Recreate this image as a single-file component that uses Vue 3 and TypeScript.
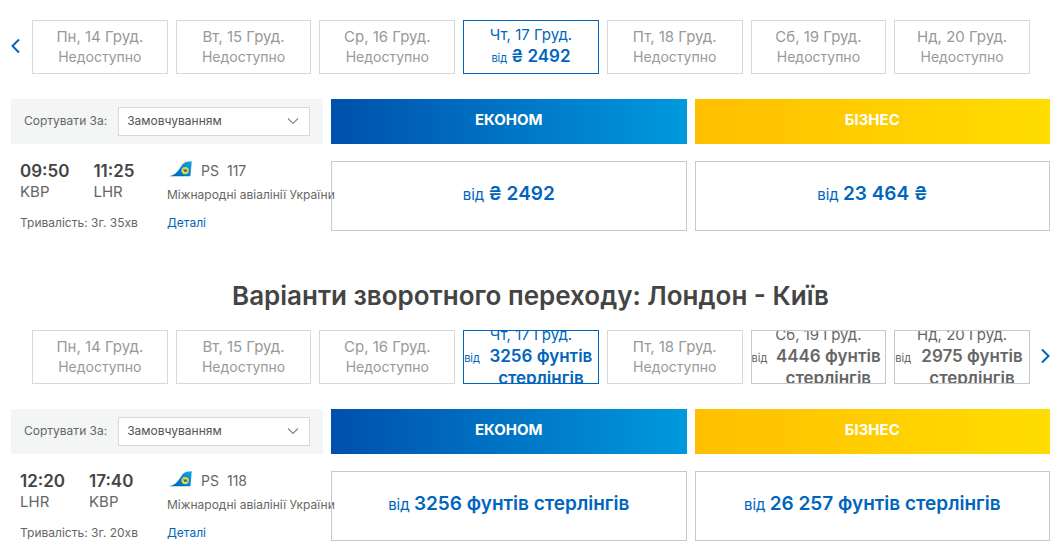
<script setup lang="ts">
import { ref } from 'vue'

interface DayOption {
  date: string
  price?: string
}

interface Flight {
  departTime: string
  departCode: string
  arriveTime: string
  arriveCode: string
  duration: string
  number: string
}

interface Direction {
  id: string
  title?: string
  arrow: 'prev' | 'next'
  days: DayOption[]
  flight: Flight
  economy: string
  business: string
}

const directions: Direction[] = [
  {
    id: 'outbound',
    arrow: 'prev',
    days: [
      { date: 'Пн, 14 Груд.' },
      { date: 'Вт, 15 Груд.' },
      { date: 'Ср, 16 Груд.' },
      { date: 'Чт, 17 Груд.', price: '₴ 2492' },
      { date: 'Пт, 18 Груд.' },
      { date: 'Сб, 19 Груд.' },
      { date: 'Нд, 20 Груд.' },
    ],
    flight: {
      departTime: '09:50',
      departCode: 'KBP',
      arriveTime: '11:25',
      arriveCode: 'LHR',
      duration: '3г. 35хв',
      number: '117',
    },
    economy: '₴ 2492',
    business: '23 464 ₴',
  },
  {
    id: 'return',
    title: 'Варіанти зворотного переходу: Лондон - Київ',
    arrow: 'next',
    days: [
      { date: 'Пн, 14 Груд.' },
      { date: 'Вт, 15 Груд.' },
      { date: 'Ср, 16 Груд.' },
      { date: 'Чт, 17 Груд.', price: '3256 фунтів стерлінгів' },
      { date: 'Пт, 18 Груд.' },
      { date: 'Сб, 19 Груд.', price: '4446 фунтів стерлінгів' },
      { date: 'Нд, 20 Груд.', price: '2975 фунтів стерлінгів' },
    ],
    flight: {
      departTime: '12:20',
      departCode: 'LHR',
      arriveTime: '17:40',
      arriveCode: 'KBP',
      duration: '3г. 20хв',
      number: '118',
    },
    economy: '3256 фунтів стерлінгів',
    business: '26 257 фунтів стерлінгів',
  },
]

const selectedDay = ref<Record<string, number>>({ outbound: 3, return: 3 })
</script>

<template>
  <main class="page">
    <section v-for="dir in directions" :key="dir.id" class="direction">
      <h2 v-if="dir.title" class="title">{{ dir.title }}</h2>

      <div class="strip">
        <button v-if="dir.arrow === 'prev'" class="arrow prev" type="button" aria-label="Попередні дати">
          <svg width="9" height="16" viewBox="0 0 9 16"><path d="M8 1.5 1.5 8 8 14.5" /></svg>
        </button>
        <div class="days">
          <button
            v-for="(day, i) in dir.days"
            :key="day.date"
            type="button"
            class="day"
            :class="{ available: day.price, selected: selectedDay[dir.id] === i }"
            :disabled="!day.price"
            @click="selectedDay[dir.id] = i"
          >
            <span class="day-date">{{ day.date }}</span>
            <span v-if="day.price" class="day-fare">
              <span class="day-from">від</span>
              <span class="day-price">{{ day.price }}</span>
            </span>
            <span v-else class="day-none">Недоступно</span>
          </button>
        </div>
        <button v-if="dir.arrow === 'next'" class="arrow next" type="button" aria-label="Наступні дати">
          <svg width="9" height="16" viewBox="0 0 9 16"><path d="M1 1.5 7.5 8 1 14.5" /></svg>
        </button>
      </div>

      <div class="grid head">
        <div class="sort">
          <label :for="`sort-${dir.id}`">Сортувати За:</label>
          <div class="select-box">
            <select :id="`sort-${dir.id}`">
              <option>Замовчуванням</option>
            </select>
            <svg class="chevron" width="12" height="8" viewBox="0 0 12 8"><path d="M1 1.5 6 6.5 11 1.5" /></svg>
          </div>
        </div>
        <div class="cabin economy">ЕКОНОМ</div>
        <div class="cabin business">БІЗНЕС</div>
      </div>

      <div class="grid">
        <div class="flight">
          <div class="route">
            <div class="points">
              <div>
                <div class="time">{{ dir.flight.departTime }}</div>
                <div class="code">{{ dir.flight.departCode }}</div>
              </div>
              <div>
                <div class="time">{{ dir.flight.arriveTime }}</div>
                <div class="code">{{ dir.flight.arriveCode }}</div>
              </div>
            </div>
            <div class="small">Тривалість: {{ dir.flight.duration }}</div>
          </div>
          <div class="carrier">
            <div class="number">
              <svg class="tail" width="24" height="16" viewBox="0 0 24 16">
                <defs>
                  <linearGradient :id="`tail-${dir.id}`" x1="0" y1="1" x2="1" y2="0">
                    <stop offset="0" stop-color="#0062ae" />
                    <stop offset="0.5" stop-color="#0083d0" />
                    <stop offset="1" stop-color="#19a5e4" />
                  </linearGradient>
                </defs>
                <path :fill="`url(#tail-${dir.id})`" d="M0.6 15C5.2 14.2 7.6 11.6 10 8.4L13.4 3.6C15.2 1.2 17.6.6 22.8.2L21.4 15.2H.6Z" />
                <circle cx="16.2" cy="9.6" r="3.7" fill="#e6d93a" />
                <path d="M13.6 8.2 16 8.8 17.2 7.8 17.6 9.4 19.2 10.8 17 10.4 15.2 10.9 15.4 9.9Z" fill="#12679f" />
              </svg>
              <span>PS</span>
              <span>{{ dir.flight.number }}</span>
            </div>
            <div class="small airline">Міжнародні авіалінії України</div>
            <a class="small details" href="#">Деталі</a>
          </div>
        </div>
        <button class="fare" type="button"><span>від</span> <b>{{ dir.economy }}</b></button>
        <button class="fare" type="button"><span>від</span> <b>{{ dir.business }}</b></button>
      </div>
    </section>
  </main>
</template>

<style>
body {
  margin: 0;
  background: #fff;
}
</style>

<style scoped>
.page {
  box-sizing: border-box;
  padding: 20px 12px 12px 11px;
  font-family: Inter, "Noto Sans", sans-serif;
  color: #666;
}

.page * {
  box-sizing: border-box;
}

button {
  font-family: inherit;
  padding: 0;
  border: 0;
  background: none;
  color: inherit;
}

.title {
  margin: 47px 0 18px;
  text-align: center;
  font-size: 26px;
  line-height: 32px;
  font-weight: 600;
  color: #444;
}

.strip {
  display: grid;
  grid-template-columns: 21px minmax(0, 1fr) 20px;
  align-items: center;
}

.days {
  grid-column: 2;
  grid-row: 1;
  display: grid;
  grid-template-columns: repeat(7, minmax(0, 1fr));
  gap: 8px;
}

.arrow {
  display: flex;
  grid-row: 1;
  padding-bottom: 2px;
}

.arrow.prev {
  grid-column: 1;
}

.arrow.next {
  grid-column: 3;
  justify-content: flex-end;
}

.arrow path {
  fill: none;
  stroke: #0065bd;
  stroke-width: 2;
}

.day {
  height: 54px;
  display: flex;
  flex-direction: column;
  align-items: center;
  justify-content: center;
  overflow: hidden;
  border: 1px solid #d8d8d8;
  color: #999;
}

.day.available {
  border-color: #c8c8c8;
  color: #666;
}

.day.selected {
  border-color: #0065bd;
  color: #0065bd;
}

.day-date {
  font-size: 15px;
  line-height: 20px;
}

.day-none {
  font-size: 14px;
  line-height: 20px;
}

.day-fare {
  display: flex;
  align-items: baseline;
  gap: 4px;
  line-height: 22px;
}

.day-from {
  font-size: 11px;
}

.day-price {
  font-size: 17px;
  font-weight: 600;
}

.grid {
  display: grid;
  grid-template-columns: 312px minmax(0, 1fr) minmax(0, 1fr);
  column-gap: 8px;
}

.head {
  margin: 25px 0 17px;
}

.sort {
  display: flex;
  align-items: center;
  gap: 11px;
  padding: 8px 13px;
  background: #f4f6f6;
  font-size: 12px;
  line-height: 16px;
  white-space: nowrap;
}

.sort label {
  padding-bottom: 2px;
}

.select-box {
  position: relative;
  flex: 1;
}

.select-box select {
  display: block;
  width: 100%;
  height: 29px;
  padding: 0 28px 2px 8px;
  border: 1px solid #d8d8d8;
  border-radius: 0;
  appearance: none;
  background: #fff;
  font: inherit;
  color: #555;
}

.chevron {
  position: absolute;
  right: 11px;
  top: 10px;
  pointer-events: none;
}

.chevron path {
  fill: none;
  stroke: #888;
  stroke-width: 1.2;
}

.cabin {
  padding: 10px 0 13px;
  text-align: center;
  font-size: 15px;
  line-height: 22px;
  font-weight: 700;
  color: #fff;
}

.economy {
  background: linear-gradient(90deg, #0050ab, #0099de);
}

.business {
  background: linear-gradient(90deg, #ffbf00, #ffdd00);
}

.flight {
  display: grid;
  grid-template-columns: 147px minmax(0, 1fr);
  padding-left: 9px;
  white-space: nowrap;
}

.points {
  display: flex;
  gap: 24px;
  margin-bottom: 10px;
}

.time {
  font-size: 17px;
  line-height: 20px;
  font-weight: 600;
  color: #444;
}

.code {
  font-size: 15px;
  line-height: 22px;
}

.small {
  font-size: 12px;
  line-height: 20px;
}

.number {
  display: flex;
  align-items: center;
  gap: 8px;
  font-size: 14px;
  line-height: 20px;
}

.tail {
  flex: none;
  margin: 0 0 4px 2px;
}

.airline {
  margin: 4px 0 8px;
}

.details {
  display: block;
  color: #0065bd;
  text-decoration: none;
}

.fare {
  height: 70px;
  padding-bottom: 4px;
  border: 1px solid #c8c8c8;
  font-size: 15px;
  line-height: 24px;
  color: #0065bd;
}

.fare b {
  font-size: 19px;
  font-weight: 600;
}
</style>
